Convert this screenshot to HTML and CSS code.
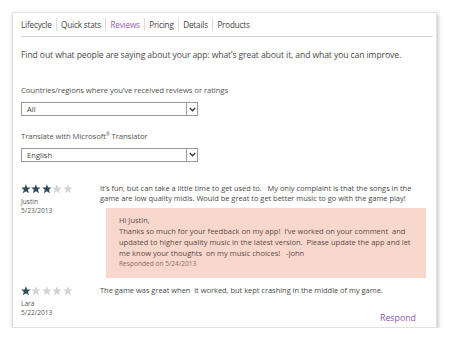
FILE: index.html
```html
<!DOCTYPE html>
<html>
<head>
<meta charset="utf-8">
<link rel="stylesheet" href="styles.css">
</head>
<body>
<div class="card">
  <nav class="tabs">
    <span class="tab">Lifecycle</span>
    <span class="tab">Quick stats</span>
    <span class="tab active">Reviews</span>
    <span class="tab">Pricing</span>
    <span class="tab">Details</span>
    <span class="tab">Products</span>
  </nav>
  <p class="intro">Find out what people are saying about your app: what’s great about it, and what you can improve.</p>

  <label class="label first">Countries/regions where you’ve received reviews or ratings</label>
  <div class="select"><span class="value">All</span><span class="arrow"><svg width="7" height="5" viewBox="0 0 7 5"><path d="M0.8 1 L3.5 3.8 L6.2 1" fill="none" stroke="#333" stroke-width="1.3"/></svg></span></div>

  <label class="label second">Translate with Microsoft<sup>®</sup> Translator</label>
  <div class="select"><span class="value">English</span><span class="arrow"><svg width="7" height="5" viewBox="0 0 7 5"><path d="M0.8 1 L3.5 3.8 L6.2 1" fill="none" stroke="#333" stroke-width="1.3"/></svg></span></div>

  <div class="review r1">
    <div class="meta">
      <div class="stars">
        <svg class="star on" viewBox="0 0 10 10"><polygon points="5,0.3 6.3,3.6 9.8,3.7 7.1,5.9 8.1,9.5 5,7.4 1.9,9.5 2.9,5.9 0.2,3.7 3.7,3.6"/></svg>
        <svg class="star on" viewBox="0 0 10 10"><polygon points="5,0.3 6.3,3.6 9.8,3.7 7.1,5.9 8.1,9.5 5,7.4 1.9,9.5 2.9,5.9 0.2,3.7 3.7,3.6"/></svg>
        <svg class="star on" viewBox="0 0 10 10"><polygon points="5,0.3 6.3,3.6 9.8,3.7 7.1,5.9 8.1,9.5 5,7.4 1.9,9.5 2.9,5.9 0.2,3.7 3.7,3.6"/></svg>
        <svg class="star" viewBox="0 0 10 10"><polygon points="5,0.3 6.3,3.6 9.8,3.7 7.1,5.9 8.1,9.5 5,7.4 1.9,9.5 2.9,5.9 0.2,3.7 3.7,3.6"/></svg>
        <svg class="star" viewBox="0 0 10 10"><polygon points="5,0.3 6.3,3.6 9.8,3.7 7.1,5.9 8.1,9.5 5,7.4 1.9,9.5 2.9,5.9 0.2,3.7 3.7,3.6"/></svg>
      </div>
      <div class="who">Justin</div>
      <div class="who">5/23/2013</div>
    </div>
    <div class="body">
      <p class="text">It’s fun, but can take a little time to get used to.&nbsp;&nbsp; My only complaint is that the songs in the<br>game are low quality midis. Would be great to get better music to go with the game play!</p>
      <div class="response">
        <p class="resp-text">Hi Justin,<br>Thanks so much for your feedback on my app!&nbsp; I’ve worked on your comment&nbsp; and updated to higher quality music in the latest version.&nbsp; Please update the app and let me know your thoughts&nbsp; on my music choices!&nbsp;&nbsp; -John</p>
        <p class="resp-date">Responded on 5/24/2013</p>
      </div>
    </div>
  </div>

  <div class="review r2">
    <div class="meta">
      <div class="stars">
        <svg class="star on" viewBox="0 0 10 10"><polygon points="5,0.3 6.3,3.6 9.8,3.7 7.1,5.9 8.1,9.5 5,7.4 1.9,9.5 2.9,5.9 0.2,3.7 3.7,3.6"/></svg>
        <svg class="star" viewBox="0 0 10 10"><polygon points="5,0.3 6.3,3.6 9.8,3.7 7.1,5.9 8.1,9.5 5,7.4 1.9,9.5 2.9,5.9 0.2,3.7 3.7,3.6"/></svg>
        <svg class="star" viewBox="0 0 10 10"><polygon points="5,0.3 6.3,3.6 9.8,3.7 7.1,5.9 8.1,9.5 5,7.4 1.9,9.5 2.9,5.9 0.2,3.7 3.7,3.6"/></svg>
        <svg class="star" viewBox="0 0 10 10"><polygon points="5,0.3 6.3,3.6 9.8,3.7 7.1,5.9 8.1,9.5 5,7.4 1.9,9.5 2.9,5.9 0.2,3.7 3.7,3.6"/></svg>
        <svg class="star" viewBox="0 0 10 10"><polygon points="5,0.3 6.3,3.6 9.8,3.7 7.1,5.9 8.1,9.5 5,7.4 1.9,9.5 2.9,5.9 0.2,3.7 3.7,3.6"/></svg>
      </div>
      <div class="who">Lara</div>
      <div class="who">5/22/2013</div>
    </div>
    <div class="body">
      <p class="text">The game was great when&nbsp; it worked, but kept crashing in the middle of my game.</p>
      <div class="actions"><span class="respond">Respond</span></div>
    </div>
  </div>
</div>
</body>
</html>
```

FILE: styles.css
```css
* { box-sizing: border-box; }
html, body { margin: 0; padding: 0; background: #fff; }
body {
  font-family: "Open Sans", "Noto Sans", sans-serif;
  color: #4a4a4a;
}
.card {
  margin: 12px 0 0 12px;
  width: 425px;
  height: 316px;
  background: #fff;
  border: 1px solid #e2e2e2;
  box-shadow: 1px 2px 4px rgba(0,0,0,0.28);
  padding: 0 3px 0 8px;
  display: flex;
  flex-direction: column;
}
.tabs {
  display: flex;
  align-items: center;
  height: 24px;
  flex: none;
  border-bottom: 1px solid #d6d6d6;
  font-size: 8.1px;
  letter-spacing: -0.15px;
  color: #404040;
}
.tab {
  padding: 0 4px 0 4.5px;
  line-height: 13px;
  border-left: 1px solid #dcdcdc;
}
.tab:first-child { border-left: 0; padding-left: 0; }
.tab.active { color: #9a5aae; }
.intro {
  margin: 12px 0 0;
  font-size: 8.65px;
  line-height: 12px;
  letter-spacing: -0.12px;
  color: #4a4a4a;
}
.label {
  display: block;
  font-size: 7.8px;
  line-height: 11px;
  letter-spacing: -0.12px;
  color: #555;
}
.label.first { margin-top: 24px; }
.label.second { margin-top: 13px; }
.label sup { font-size: 4.5px; vertical-align: 2.5px; }
.select {
  margin-top: 6px;
  width: 177px;
  height: 14px;
  flex: none;
  border: 1px solid #9a9a9a;
  display: flex;
  align-items: stretch;
  font-size: 7.6px;
  color: #444;
  background: #fff;
}
.select .value {
  flex: 1;
  padding-left: 5px;
  line-height: 12px;
}
.select .arrow {
  width: 11px;
  border-left: 1px solid #9a9a9a;
  display: flex;
  align-items: center;
  justify-content: center;
}
.review {
  display: flex;
  flex: none;
}
.review.r1 { margin-top: 21px; }
.review.r2 { margin-top: 6.5px; }
.meta {
  width: 79px;
  flex: none;
  padding-top: 1px;
}
.stars {
  display: flex;
  gap: 0.6px;
  height: 10px;
}
.star {
  width: 9.8px;
  height: 9.8px;
  fill: #d4d4d4;
}
.star.on { fill: #2f4a5a; }
.who {
  font-size: 6.6px;
  line-height: 9px;
  color: #555;
}
.stars + .who { margin-top: 3px; }
.body {
  flex: 1;
  padding-right: 3px;
}
.text {
  margin: 0;
  font-size: 7.5px;
  line-height: 10px;
  letter-spacing: -0.03px;
  color: #4a4a4a;
}
.response {
  margin: 5px 4px 0 6px;
  background: #f8d8cd;
  padding: 7.5px 8px 10px 13px;
}
.resp-text {
  margin: 0;
  font-size: 7.5px;
  line-height: 11px;
  color: #5e4a44;
}
.resp-date {
  margin: 0;
  font-size: 6.6px;
  line-height: 9px;
  color: #8a6e64;
}
.actions {
  display: flex;
  justify-content: flex-end;
  margin-top: 17px;
  padding-right: 14px;
}
.respond {
  font-size: 8.8px;
  line-height: 12px;
  color: #8a56a6;
}
```
